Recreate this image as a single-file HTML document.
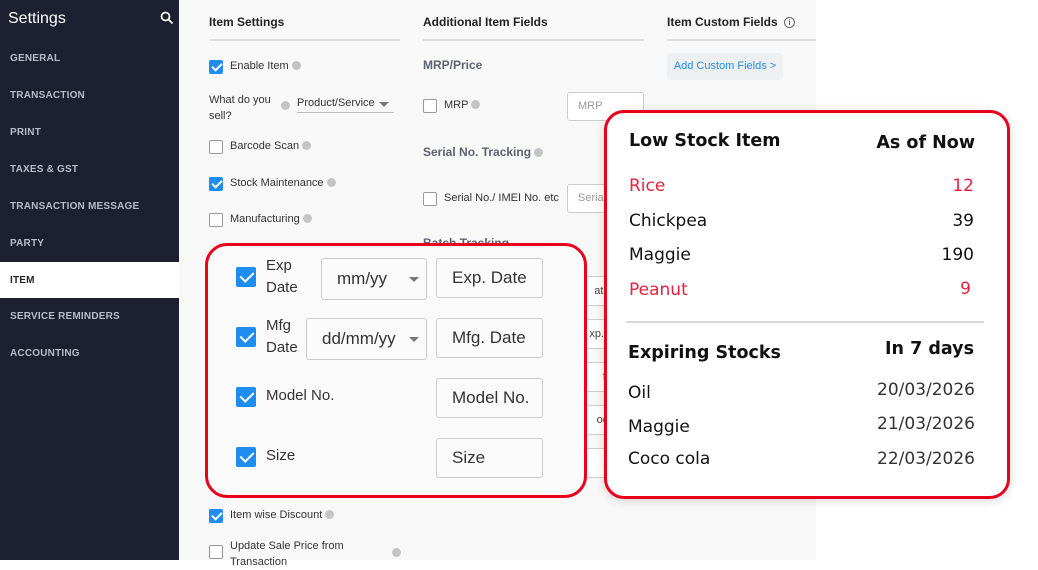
<!DOCTYPE html>
<html><head><meta charset="utf-8"><style>
*{box-sizing:border-box;margin:0;padding:0}
body{width:1038px;height:560px;overflow:hidden;position:relative;background:#fff;font-family:"Liberation Sans",sans-serif}
.a{position:absolute}
#side{left:0;top:0;width:179px;height:560px;background:#1c2031}
.nav{position:absolute;left:10px;font-size:10px;font-weight:bold;color:#b8bcc6;letter-spacing:.2px}
#main{left:179px;top:0;width:637px;height:560px;background:#f8f8f8}
.h{font-size:12px;font-weight:bold;color:#222}
.t{font-size:11px;color:#333}
.g{font-size:12px;font-weight:bold;color:#5e6270}
.cb{position:absolute;width:14px;height:14px;border:1.5px solid #999;border-radius:2px;background:#fff}
.cb.on{background:#1f8cf0;border-color:#1f8cf0}
.cb.on:after{content:"";position:absolute;left:3.5px;top:0px;width:4px;height:8px;border:solid #fff;border-width:0 2px 2px 0;transform:rotate(45deg)}
.i{display:inline-block;width:9px;height:9px;border-radius:50%;background:#c4c4c4;vertical-align:-1px;margin-left:3px}
.line{height:2px;background:#e0e0e0}
.inp{position:absolute;border:1px solid #ccc;border-radius:3px;background:#fff;font-size:11px;color:#999;padding:0 0 0 10px}
.big{position:absolute;width:20px;height:20px;border-radius:2px;background:#1f8cf0}
.big:after{content:"";position:absolute;left:6.5px;top:1.5px;width:6px;height:11px;border:solid #fff;border-width:0 2.5px 2.5px 0;transform:rotate(45deg)}
.lt{position:absolute;font-size:15px;color:#333;line-height:22px}
.box{position:absolute;border:1px solid #ccc;border-radius:3px;background:#fafafa;font-size:17px;color:#333;padding-left:15px}
.arr{position:absolute;width:0;height:0;border-left:5px solid transparent;border-right:5px solid transparent;border-top:5px solid #777}
.p{font-family:"DejaVu Sans","Liberation Sans",sans-serif;position:absolute;font-size:17px;color:#111}
</style></head><body>
<div id="side" class="a">
<div class="a" style="left:8px;top:10px;font-size:16px;color:#fff">Settings</div>
<svg class="a" style="left:160px;top:11px" width="14" height="14" viewBox="0 0 14 14"><circle cx="5.5" cy="5.5" r="4" fill="none" stroke="#fff" stroke-width="1.7"/><line x1="8.5" y1="8.5" x2="12.5" y2="12.5" stroke="#fff" stroke-width="1.8"/></svg>
<div class="nav" style="top:53px">GENERAL</div>
<div class="nav" style="top:90px">TRANSACTION</div>
<div class="nav" style="top:127px">PRINT</div>
<div class="nav" style="top:164px">TAXES &amp; GST</div>
<div class="nav" style="top:201px">TRANSACTION MESSAGE</div>
<div class="nav" style="top:238px">PARTY</div>
<div class="a" style="left:0;top:262px;width:179px;height:36px;background:#fff"></div>
<div class="nav" style="top:275px;color:#222">ITEM</div>
<div class="nav" style="top:311px">SERVICE REMINDERS</div>
<div class="nav" style="top:348px">ACCOUNTING</div>
</div>
<div id="main" class="a"></div>
<div class="a h" style="left:209px;top:15px">Item Settings</div>
<div class="a line" style="left:209px;top:39px;width:191px"></div>
<div class="a h" style="left:423px;top:15px">Additional Item Fields</div>
<div class="a line" style="left:423px;top:39px;width:221px"></div>
<div class="a h" style="left:667px;top:15px">Item Custom Fields <span style="display:inline-block;width:11px;height:11px;border:1px solid #666;border-radius:50%;font-size:8px;text-align:center;line-height:9px;font-weight:normal;margin-left:3px;vertical-align:1px">i</span></div>
<div class="a line" style="left:667px;top:39px;width:149px"></div>
<div class="a" style="left:667px;top:53px;width:116px;height:27px;background:#eeeff1;border-radius:4px;font-size:11px;color:#1f8cf0;line-height:27px;text-align:center">Add Custom Fields &gt;</div>

<div class="cb on" style="left:209px;top:60px"></div><div class="a t" style="left:230px;top:60px">Enable Item<span class="i"></span></div>
<div class="a t" style="left:209px;top:92px;line-height:16px">What do you<br>sell?</div><span class="a i" style="left:278px;top:101px"></span>
<div class="a t" style="left:297px;top:97px;width:97px;border-bottom:1px solid #bbb;padding-bottom:3px">Product/Service</div><div class="arr" style="left:379px;top:102px;border-top-color:#777"></div>
<div class="cb" style="left:209px;top:140px"></div><div class="a t" style="left:230px;top:140px">Barcode Scan<span class="i"></span></div>
<div class="cb on" style="left:209px;top:177px"></div><div class="a t" style="left:230px;top:177px">Stock Maintenance<span class="i"></span></div>
<div class="cb" style="left:209px;top:213px"></div><div class="a t" style="left:230px;top:213px">Manufacturing<span class="i"></span></div>
<div class="cb on" style="left:209px;top:509px"></div><div class="a t" style="left:230px;top:509px">Item wise Discount<span class="i"></span></div>
<div class="cb" style="left:209px;top:545px"></div><div class="a t" style="left:230px;top:538px;line-height:16px">Update Sale Price from<br>Transaction</div><span class="a i" style="left:389px;top:548px"></span>

<div class="a g" style="left:423px;top:58px">MRP/Price</div>
<div class="cb" style="left:423px;top:99px"></div><div class="a t" style="left:444px;top:99px">MRP<span class="i"></span></div>
<div class="inp" style="left:567px;top:92px;width:77px;height:29px;line-height:27px">MRP</div>
<div class="a g" style="left:423px;top:145px">Serial No. Tracking<span class="i"></span></div>
<div class="cb" style="left:423px;top:192px"></div><div class="a t" style="left:444px;top:192px">Serial No./ IMEI No. etc</div>
<div class="inp" style="left:567px;top:184px;width:77px;height:29px;line-height:27px">Serial</div>
<div class="a g" style="left:423px;top:236px">Batch Tracking</div>
<div class="inp" style="left:560px;top:276px;width:56px;height:30px;line-height:28px;color:#444;padding-left:0;text-align:right">atch</div>
<div class="inp" style="left:560px;top:319px;width:56px;height:30px;line-height:28px;color:#444;padding-left:0;text-align:right">xp. D</div>
<div class="inp" style="left:560px;top:362px;width:56px;height:30px;line-height:28px;color:#444;padding-left:0;text-align:right">fg.</div>
<div class="inp" style="left:560px;top:405px;width:56px;height:30px;line-height:28px;color:#444;padding-left:0;text-align:right">ode</div>
<div class="inp" style="left:560px;top:448px;width:56px;height:30px;line-height:28px;color:#444;padding-left:0;text-align:right">ze</div>

<div class="a" style="left:205px;top:243px;width:382px;height:255px;background:#fafafa;border:3px solid #e8001c;border-radius:22px"></div>
<div class="big" style="left:236px;top:267px"></div><div class="lt" style="left:266px;top:255px">Exp<br>Date</div>
<div class="box" style="left:321px;top:258px;width:106px;height:42px;line-height:40px">mm/yy</div><div class="arr" style="left:409px;top:277px"></div>
<div class="box" style="left:436px;top:258px;width:107px;height:40px;line-height:38px">Exp. Date</div>
<div class="big" style="left:236px;top:327px"></div><div class="lt" style="left:266px;top:315px">Mfg<br>Date</div>
<div class="box" style="left:306px;top:318px;width:121px;height:42px;line-height:40px">dd/mm/yy</div><div class="arr" style="left:409px;top:337px"></div>
<div class="box" style="left:436px;top:318px;width:107px;height:40px;line-height:38px">Mfg. Date</div>
<div class="big" style="left:236px;top:387px"></div><div class="lt" style="left:266px;top:385px">Model No.</div>
<div class="box" style="left:436px;top:378px;width:107px;height:40px;line-height:38px">Model No.</div>
<div class="big" style="left:236px;top:447px"></div><div class="lt" style="left:266px;top:445px">Size</div>
<div class="box" style="left:436px;top:438px;width:107px;height:40px;line-height:38px">Size</div>

<div class="a" style="left:604px;top:110px;width:406px;height:389px;background:#fff;border:3px solid #e8001c;border-radius:20px;box-shadow:0 2px 10px rgba(0,0,0,.15)"></div>
<div class="p" style="left:629px;top:131px;font-weight:bold;font-size:17.5px">Low Stock Item</div>
<div class="p" style="right:63px;top:133px;font-weight:bold;font-size:17.5px">As of Now</div>
<div class="p" style="left:629px;top:176px;color:#e8203c">Rice</div><div class="p" style="right:64px;top:176px;color:#e8203c">12</div>
<div class="p" style="left:629px;top:211px">Chickpea</div><div class="p" style="right:64px;top:211px">39</div>
<div class="p" style="left:629px;top:245px">Maggie</div><div class="p" style="right:64px;top:245px">190</div>
<div class="p" style="left:629px;top:280px;color:#e8203c">Peanut</div><div class="p" style="right:67px;top:279px;color:#e8203c">9</div>
<div class="a" style="left:626px;top:321px;width:358px;height:1.5px;background:#d8d8d8"></div>
<div class="p" style="left:628px;top:343px;font-weight:bold;font-size:17.5px">Expiring Stocks</div>
<div class="p" style="right:64px;top:339px;font-weight:bold;font-size:17.5px">In 7 days</div>
<div class="p" style="left:628px;top:383px">Oil</div><div class="p" style="right:63px;top:380px;color:#333">20/03/2026</div>
<div class="p" style="left:628px;top:417px">Maggie</div><div class="p" style="right:63px;top:414px;color:#333">21/03/2026</div>
<div class="p" style="left:628px;top:449px">Coco cola</div><div class="p" style="right:63px;top:449px;color:#333">22/03/2026</div>
</body></html>
